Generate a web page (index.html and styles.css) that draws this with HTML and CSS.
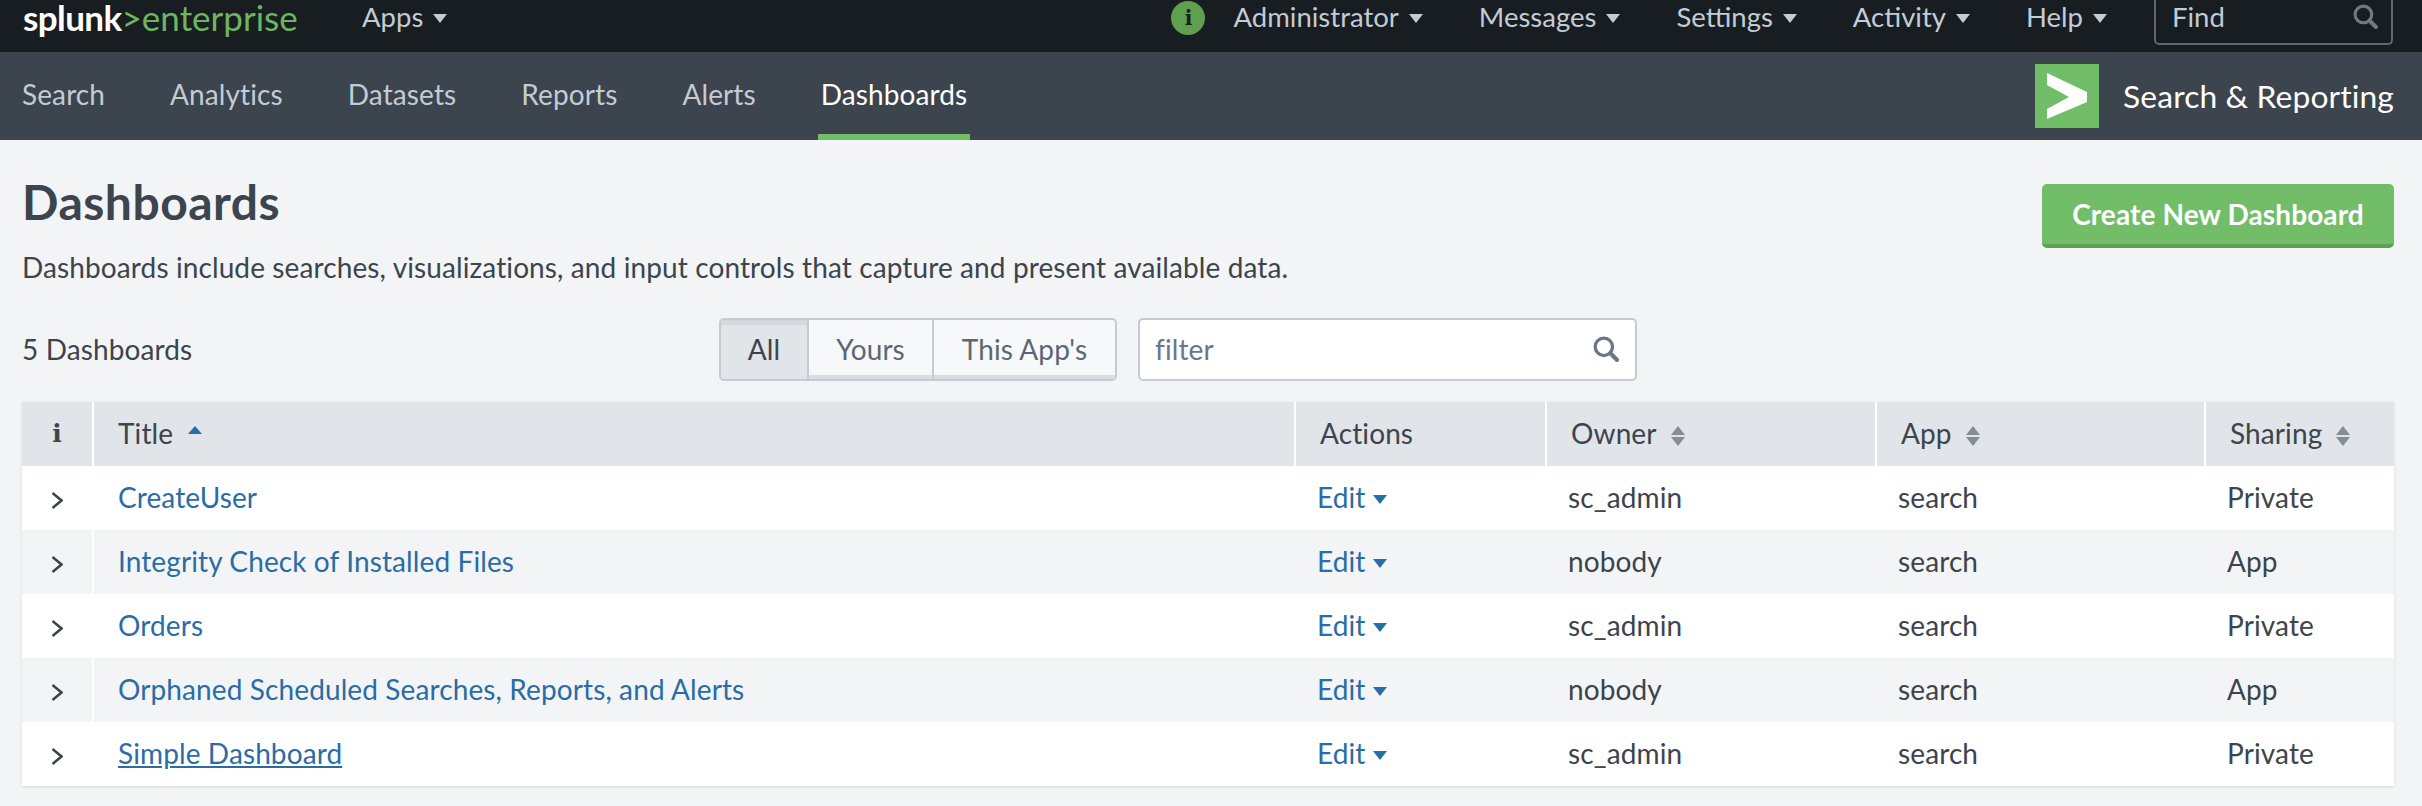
FILE: index.html
```html
<!DOCTYPE html>
<html lang="en">

<head>
    <meta charset="UTF-8">
    <title>Dashboards</title>
    <link rel="stylesheet" href="styles.css">
</head>

<body>
    <header class="topbar">
        <div class="brand"><span class="brand-white">splunk</span><span class="brand-green">&gt;enterprise</span></div>
        <a class="top-link apps-link">Apps<span class="caret"></span></a>
        <div class="top-right">
            <span class="info-badge">i</span>
            <a class="top-link">Administrator<span class="caret"></span></a>
            <a class="top-link">Messages<span class="caret"></span></a>
            <a class="top-link">Settings<span class="caret"></span></a>
            <a class="top-link">Activity<span class="caret"></span></a>
            <a class="top-link">Help<span class="caret"></span></a>
            <div class="find-box">
                <span>Find</span>
                <svg class="find-icon" viewBox="0 0 24 24"><circle cx="10" cy="10" r="8" fill="none" stroke="currentColor" stroke-width="3"/><path d="M16 16l6 6" stroke="currentColor" stroke-width="4" stroke-linecap="round"/></svg>
            </div>
        </div>
    </header>

    <nav class="appbar">
        <a class="tab">Search</a>
        <a class="tab">Analytics</a>
        <a class="tab">Datasets</a>
        <a class="tab">Reports</a>
        <a class="tab">Alerts</a>
        <a class="tab active">Dashboards</a>
        <div class="app-name">
            <span class="app-logo"><svg viewBox="0 0 64 64"><path d="M12 9l40 19v10L12 55V45l22-12-22-12z" fill="#fff"/></svg></span>
            <span>Search &amp; Reporting</span>
        </div>
    </nav>

    <main class="content">
        <div class="title-row">
            <div>
                <h1>Dashboards</h1>
                <p class="desc">Dashboards include searches, visualizations, and input controls that capture and present available data.</p>
            </div>
            <button class="create-btn">Create New Dashboard</button>
        </div>

        <div class="filter-row">
            <div class="count">5 Dashboards</div>
            <div class="pills">
                <span class="pill pill-all selected">All</span>
                <span class="pill pill-yours">Yours</span>
                <span class="pill pill-app">This App's</span>
            </div>
            <div class="filter-box">
                <span>filter</span>
                <svg class="filter-icon" viewBox="0 0 24 24"><circle cx="10" cy="10" r="8" fill="none" stroke="currentColor" stroke-width="3"/><path d="M16 16l6 6" stroke="currentColor" stroke-width="4" stroke-linecap="round"/></svg>
            </div>
        </div>

        <table class="dash-table">
            <colgroup>
                <col class="col-i"><col class="col-title"><col class="col-actions"><col class="col-owner"><col class="col-app"><col>
            </colgroup>
            <thead>
                <tr>
                    <th class="info-col">i</th>
                    <th>Title<span class="sort-up"></span></th>
                    <th>Actions</th>
                    <th>Owner<span class="sort-both"></span></th>
                    <th>App<span class="sort-both"></span></th>
                    <th>Sharing<span class="sort-both"></span></th>
                </tr>
            </thead>
            <tbody>
                <tr>
                    <td class="arrow-col"><svg class="chev" viewBox="0 0 12 17"><path d="M1.5 1l9 7.5-9 7.5" fill="none" stroke="currentColor" stroke-width="2.5"/></svg></td>
                    <td class="title-cell"><a class="link">CreateUser</a></td>
                    <td><a class="link">Edit<span class="caret-blue"></span></a></td>
                    <td>sc_admin</td><td>search</td><td>Private</td>
                </tr>
                <tr>
                    <td class="arrow-col"><svg class="chev" viewBox="0 0 12 17"><path d="M1.5 1l9 7.5-9 7.5" fill="none" stroke="currentColor" stroke-width="2.5"/></svg></td>
                    <td class="title-cell"><a class="link">Integrity Check of Installed Files</a></td>
                    <td><a class="link">Edit<span class="caret-blue"></span></a></td>
                    <td>nobody</td><td>search</td><td>App</td>
                </tr>
                <tr>
                    <td class="arrow-col"><svg class="chev" viewBox="0 0 12 17"><path d="M1.5 1l9 7.5-9 7.5" fill="none" stroke="currentColor" stroke-width="2.5"/></svg></td>
                    <td class="title-cell"><a class="link">Orders</a></td>
                    <td><a class="link">Edit<span class="caret-blue"></span></a></td>
                    <td>sc_admin</td><td>search</td><td>Private</td>
                </tr>
                <tr>
                    <td class="arrow-col"><svg class="chev" viewBox="0 0 12 17"><path d="M1.5 1l9 7.5-9 7.5" fill="none" stroke="currentColor" stroke-width="2.5"/></svg></td>
                    <td class="title-cell"><a class="link">Orphaned Scheduled Searches, Reports, and Alerts</a></td>
                    <td><a class="link">Edit<span class="caret-blue"></span></a></td>
                    <td>nobody</td><td>search</td><td>App</td>
                </tr>
                <tr>
                    <td class="arrow-col"><svg class="chev" viewBox="0 0 12 17"><path d="M1.5 1l9 7.5-9 7.5" fill="none" stroke="currentColor" stroke-width="2.5"/></svg></td>
                    <td class="title-cell"><a class="link hovered">Simple Dashboard</a></td>
                    <td><a class="link">Edit<span class="caret-blue"></span></a></td>
                    <td>sc_admin</td><td>search</td><td>Private</td>
                </tr>
            </tbody>
        </table>
    </main>
</body>

</html>
```

FILE: styles.css
```css
/* page */
body {
    margin: 0;
    height: 806px;
    overflow: hidden;
    background-color: #f2f4f5;
    color: #3c444d;
    font-family: Lato, "Liberation Sans", sans-serif;
    font-size: 28px;
    letter-spacing: 0.11px;
}

/* top black bar */
.topbar {
    display: flex;
    align-items: flex-start;
    height: 52px;
    padding: 0 29px 0 23px;
    background-color: #171d21;
    font-size: 27.5px;
    letter-spacing: 0;
    line-height: 34px;
}

.brand {
    width: 339px;
    font-size: 35px;
}

.brand-white {
    color: #fff;
    font-weight: 700;
    letter-spacing: -0.6px;
}

.brand-green {
    color: #6fb560;
}

.top-link {
    color: #c3cbd4;
}

.top-right {
    display: flex;
    align-items: flex-start;
    gap: 56px;
    margin-left: auto;
}

.caret {
    display: inline-block;
    margin-left: 10px;
    border-left: 7px solid transparent;
    border-right: 7px solid transparent;
    border-top: 9px solid #c3cbd4;
    vertical-align: 4px;
}

.info-badge {
    width: 34px;
    height: 34px;
    margin: 1px -28px 0 0;
    border-radius: 50%;
    background-color: #5f9f50;
    color: #171d21;
    font-family: "DejaVu Serif", serif;
    font-size: 20px;
    font-weight: bold;
    line-height: 34px;
    text-align: center;
}

.find-box {
    display: flex;
    justify-content: space-between;
    width: 239px;
    height: 45px;
    margin-left: -9px;
    padding: 0 13px 0 16px;
    box-sizing: border-box;
    border: 2px solid #5c6773;
    border-top: none;
    border-radius: 0 0 5px 5px;
    color: #c3cbd4;
}

.find-icon {
    width: 25px;
    height: 25px;
    margin-top: 4px;
    color: #6f7a85;
}

/* app bar */
.appbar {
    display: flex;
    align-items: stretch;
    height: 88px;
    padding: 0 28px 0 22px;
    background-color: #3c444d;
    gap: 65px;
}

.tab {
    display: flex;
    align-items: center;
    box-sizing: border-box;
    height: 88px;
    padding-top: 2px;
    color: #c3cbd4;
    border-bottom: 6px solid transparent;
}

.tab.active {
    margin: 0 -3px;
    padding: 2px 3px 0;
    color: #fff;
    border-bottom-color: #72bd67;
}

.app-name {
    display: flex;
    align-items: center;
    gap: 24px;
    margin-left: auto;
    color: #fff;
    font-size: 31.8px;
}

.app-logo {
    display: block;
    width: 64px;
    height: 64px;
    background-color: #72bd67;
}

.app-logo svg {
    display: block;
}

/* page content */
.content {
    padding: 0 28px 0 22px;
}

.title-row {
    display: flex;
    justify-content: space-between;
    align-items: flex-start;
    height: 178px;
}

h1 {
    margin: 36px 0 0;
    font-size: 48px;
    line-height: 52px;
    font-weight: 700;
    letter-spacing: 0.5px;
}

.desc {
    margin: 23px 0 0;
    line-height: 32px;
}

.create-btn {
    width: 352px;
    height: 64px;
    margin-top: 44px;
    padding: 0;
    border: none;
    border-bottom: 4px solid #5f9f55;
    border-radius: 5px;
    background-color: #72bd67;
    color: #fff;
    font-family: inherit;
    font-size: 28px;
    font-weight: 700;
    letter-spacing: 0.11px;
}

.filter-row {
    display: flex;
    align-items: center;
    height: 63px;
    margin-bottom: 21px;
}

.count {
    width: 697px;
    padding-bottom: 2px;
}

.pills {
    display: flex;
    box-sizing: border-box;
    height: 63px;
    border: 2px solid #c3cbd4;
    border-radius: 5px;
    background-color: #f7f8fa;
    color: #5c6773;
}

.pill {
    display: flex;
    align-items: center;
    justify-content: center;
    box-sizing: border-box;
    padding-bottom: 2px;
    border-right: 2px solid #c3cbd4;
    box-shadow: inset 0 -4px #d9dde1;
}

.pill-all { width: 88px; }
.pill-yours { width: 125px; }
.pill-app { width: 181px; border-right: none; }

.pill.selected {
    background-color: #e1e4e8;
    color: #3c444d;
    box-shadow: inset 0 5px #d5d9de;
    border-radius: 3px 0 0 3px;
}

.filter-box {
    display: flex;
    justify-content: space-between;
    align-items: center;
    box-sizing: border-box;
    width: 499px;
    height: 63px;
    margin-left: 21px;
    padding: 0 16px 2px 15px;
    border: 2px solid #c3cbd4;
    border-radius: 5px;
    background-color: #fff;
    color: #6b7785;
}

.filter-icon {
    width: 26px;
    height: 26px;
    color: #6b7785;
}

/* table */
.dash-table {
    width: 2372px;
    border-collapse: separate;
    border-spacing: 0;
    table-layout: fixed;
    box-shadow: 0 1px 3px rgba(0, 0, 0, 0.1);
}

.col-i { width: 70px; }
.col-title { width: 1202px; }
.col-actions { width: 251px; }
.col-owner { width: 330px; }
.col-app { width: 329px; }

.dash-table th {
    box-sizing: border-box;
    height: 64px;
    padding: 0 24px 2px;
    background-color: #e1e4e8;
    border-left: 2px solid #fff;
    font-weight: 400;
    text-align: left;
}

.dash-table th:first-child {
    border-left: none;
}

.dash-table td {
    box-sizing: border-box;
    height: 64px;
    padding: 0 23px 2px;
    background-color: #fff;
}

.dash-table tr:nth-child(even) td {
    background-color: #f2f4f5;
}

.dash-table td.title-cell {
    padding-left: 24px;
    border-left: 2px solid #fff;
}

.dash-table th.info-col {
    padding: 0 0 2px;
    font-family: "DejaVu Serif", serif;
    font-size: 25px;
    font-weight: 700;
    text-align: center;
}

.dash-table td.arrow-col {
    padding: 0 0 2px;
    text-align: center;
}

.chev {
    display: inline-block;
    width: 12px;
    height: 17px;
    color: #3c444d;
    vertical-align: middle;
}

.link {
    color: #2a6ca6;
}

.hovered {
    text-decoration: underline;
}

.caret-blue {
    display: inline-block;
    margin-left: 8px;
    border-left: 7px solid transparent;
    border-right: 7px solid transparent;
    border-top: 9px solid #2a6ca6;
    vertical-align: 4px;
}

.sort-up {
    display: inline-block;
    margin-left: 15px;
    border-left: 7px solid transparent;
    border-right: 7px solid transparent;
    border-bottom: 8px solid #2a6ca6;
    vertical-align: 10px;
}

.sort-both {
    display: inline-block;
    position: relative;
    width: 15px;
    height: 20px;
    margin-left: 14px;
    vertical-align: -2px;
}

.sort-both::before,
.sort-both::after {
    content: "";
    position: absolute;
    left: 0;
    border-left: 7.5px solid transparent;
    border-right: 7.5px solid transparent;
}

.sort-both::before {
    top: 0;
    border-bottom: 9px solid #858e97;
}

.sort-both::after {
    bottom: 0;
    border-top: 9px solid #858e97;
}
```
